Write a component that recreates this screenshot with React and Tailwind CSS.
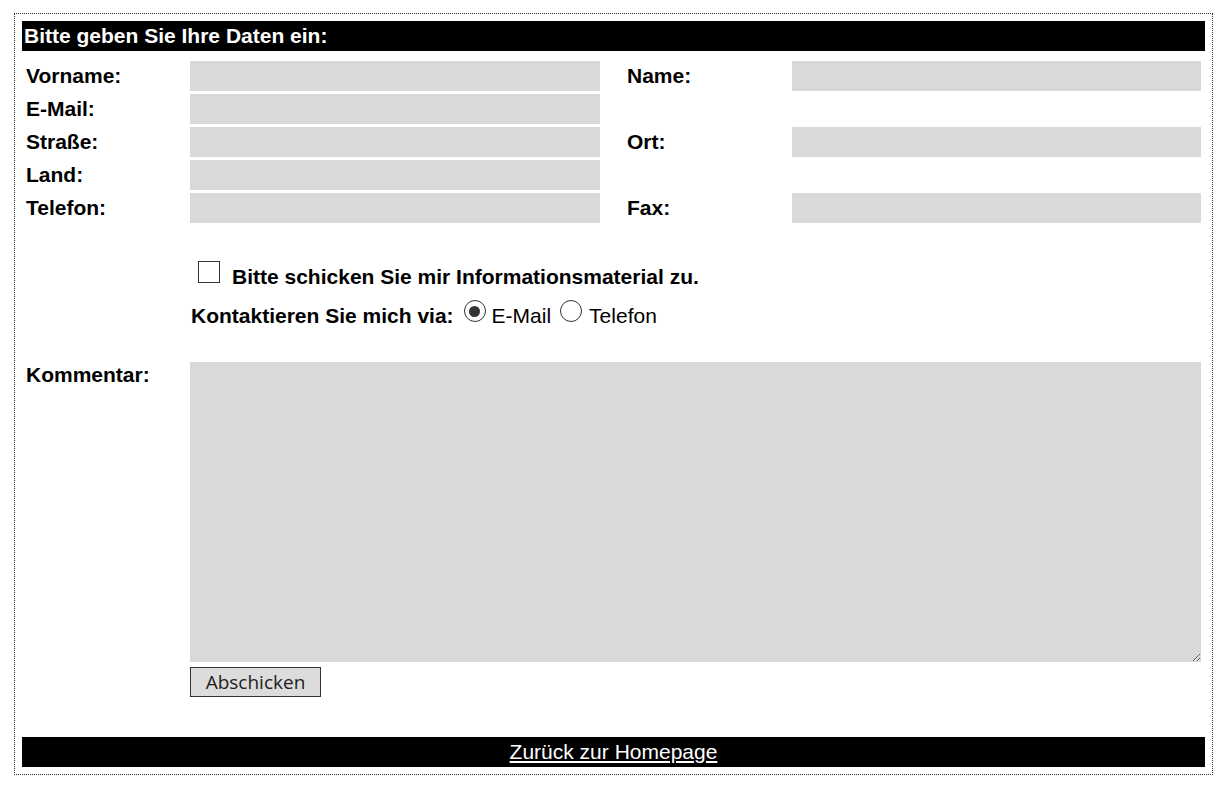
import React, { useState } from "react";

const font = { fontFamily: '"Liberation Sans", Arial, sans-serif' };

function Label({ children, className = "" }) {
  return (
    <div className={`flex h-[30px] items-center text-[21px] font-bold text-black ${className}`}>
      {children}
    </div>
  );
}

function Field() {
  return <input type="text" className="h-[30px] w-full bg-[#d9d9d9] outline-none" />;
}

function Radio({ checked, onClick }) {
  return (
    <button
      type="button"
      onClick={onClick}
      className="flex h-[22px] w-[22px] shrink-0 items-center justify-center rounded-full border border-[#333] bg-white"
    >
      {checked && <span className="h-[11px] w-[11px] rounded-full bg-[#333]" />}
    </button>
  );
}

export default function App() {
  const [info, setInfo] = useState(false);
  const [via, setVia] = useState("mail");

  return (
    <div className="bg-white pl-[14px] pt-[13px]" style={font}>
      <div className="w-[1199px] border border-dotted border-[#333] px-[7px] pt-[7px] pb-[7px]">
        <div className="flex h-[30px] items-center bg-black pl-[2px] text-[21px] font-bold text-white">
          Bitte geben Sie Ihre Daten ein:
        </div>

        <div className="mt-[10px] grid grid-cols-[168px_410px_192px_409px] gap-y-[3px]">
          <Label className="pl-[4px]">Vorname:</Label>
          <Field />
          <Label className="pl-[27px]">Name:</Label>
          <Field />

          <Label className="pl-[4px]">E-Mail:</Label>
          <Field />
          <div />
          <div />

          <Label className="pl-[4px]">Straße:</Label>
          <Field />
          <Label className="pl-[27px]">Ort:</Label>
          <Field />

          <Label className="pl-[4px]">Land:</Label>
          <Field />
          <div />
          <div />

          <Label className="pl-[4px]">Telefon:</Label>
          <Field />
          <Label className="pl-[27px]">Fax:</Label>
          <Field />
        </div>

        <div className="ml-[168px] mt-[38px] flex items-start text-[21px] font-bold">
          <button
            type="button"
            onClick={() => setInfo(!info)}
            className="ml-[8px] mr-[12px] flex h-[22px] w-[22px] shrink-0 items-center justify-center border border-[#333] bg-white"
          >
            {info && <span className="text-[14px] leading-none">✓</span>}
          </button>
          <span className="mt-[4px] leading-[24px]">Bitte schicken Sie mir Informationsmaterial zu.</span>
        </div>

        <div className="ml-[169px] mt-[11px] flex items-start text-[21px]">
          <span className="mr-[10px] mt-[4px] font-bold leading-[24px]">Kontaktieren Sie mich via:</span>
          <Radio checked={via === "mail"} onClick={() => setVia("mail")} />
          <span className="ml-[6px] mr-[9px] mt-[4px] leading-[24px]">E-Mail</span>
          <Radio checked={via === "tel"} onClick={() => setVia("tel")} />
          <span className="ml-[7px] mt-[4px] leading-[24px]">Telefon</span>
        </div>

        <div className="mt-[34px] grid grid-cols-[168px_1011px]">
          <div className="pl-[4px] pt-[1px] text-[21px] font-bold leading-[24px]">Kommentar:</div>
          <textarea className="block h-[300px] w-full resize bg-[#d9d9d9] outline-none" />
          <div />
          <div className="pt-[5px]">
            <button
              type="button"
              className="block h-[30px] w-[131px] border border-[#333] bg-[#dcdcdc] text-[19px] text-[#222]"
              style={{ fontFamily: '"Open Sans", "DejaVu Sans", sans-serif' }}
            >
              Abschicken
            </button>
          </div>
        </div>

        <div className="mt-[40px] flex h-[30px] items-center justify-center bg-black">
          <a href="#" className="text-[21px] leading-[24px] text-white underline">
            Zurück zur Homepage
          </a>
        </div>
      </div>
    </div>
  );
}
